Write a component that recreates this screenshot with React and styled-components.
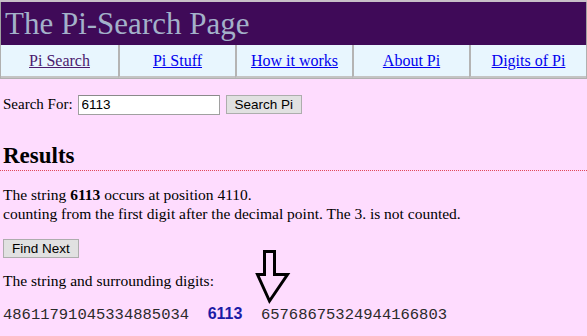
import React from "react";
import styled, { createGlobalStyle } from "styled-components";

const Global = createGlobalStyle`
  html, body { margin: 0; padding: 0; }
  body {
    background: #fedcfe;
    font-family: "Liberation Serif", "Times New Roman", serif;
    font-size: 15.5px;
    color: #000;
  }
`;

const Page = styled.div`
  width: 587px;
  height: 336px;
  overflow: hidden;
  background: #fedcfe;
  border-top: 2px solid #c8c0c8;
  box-sizing: border-box;
`;

const Header = styled.header`
  background: #3f0a58;
  height: 43px;
  display: flex;
  align-items: center;
  padding-left: 4px;
  border-left: 1px solid #a0a0a0;
  border-right: 1px solid #a0a0a0;
`;

const Title = styled.h1`
  margin: 0;
  font-weight: normal;
  font-size: 31px;
  color: #a3b1c9;
  font-family: "Liberation Serif", "Times New Roman", serif;
  line-height: 1;
  padding-bottom: 1px;
`;

const Nav = styled.nav`
  display: grid;
  grid-template-columns: repeat(5, 1fr);
  background: #e8f6fe;
  border: 1px solid #b0b0b0;
  border-top: none;
  height: 34px;
  box-sizing: border-box;
`;

const NavCell = styled.div`
  display: flex;
  align-items: center;
  justify-content: center;
  border-left: ${(p) => (p.$first ? "none" : "2px solid #b4b4b4")};
  border-bottom: 2px solid #c4c4c4;
`;

const NavLink = styled.a`
  font-size: 16px;
  color: ${(p) => (p.$visited ? "#4b1a6e" : "#0000ee")};
  text-decoration: underline;
`;

const Content = styled.main`
  position: relative;
  padding: 16px 3px 0;
`;

const SearchRow = styled.form`
  display: flex;
  align-items: center;
  height: 19px;
  margin: 0;
`;

const Label = styled.span`
  font-size: 15px;
  margin-right: 5px;
`;

const Input = styled.input`
  width: 142px;
  height: 20px;
  box-sizing: border-box;
  border: 1px solid #a0a0a0;
  border-top-color: #8a8a8a;
  padding: 1px 3px;
  margin: 0 6px 0 0;
  font-family: "Liberation Sans", Arial, sans-serif;
  font-size: 13.5px;
  background: #fff;
  color: #000;
`;

const Button = styled.button`
  display: block;
  height: 19px;
  box-sizing: border-box;
  padding: 0 8px;
  margin: ${(p) => p.$m || "0"};
  border: 1px solid #adadad;
  background: #e1e1e1;
  font-family: "Liberation Sans", Arial, sans-serif;
  font-size: 13.5px;
  color: #000;
  line-height: 1;
`;

const Heading = styled.h2`
  margin: 29px -3px 0;
  padding: 0 3px 1px;
  font-size: 23px;
  font-weight: bold;
  line-height: 26px;
  border-bottom: 1px dotted #e0485a;
`;

const Para = styled.p`
  margin: ${(p) => p.$m || "0"};
  font-size: 15.5px;
  line-height: 19px;
`;

const Digits = styled.div`
  margin-top: 14px;
  font-family: "Liberation Mono", "Courier New", monospace;
  font-size: 15.5px;
  line-height: 19px;
  color: #2a2a2a;
  white-space: pre;
`;

const Found = styled.b`
  color: #1b1ba6;
  font-family: "Liberation Sans", Arial, sans-serif;
  font-size: 16px;
`;

const Arrow = styled.svg`
  position: absolute;
  left: 250px;
  top: 166px;
`;

export default function App() {
  const tabs = [
    ["Pi Search", true],
    ["Pi Stuff"],
    ["How it works"],
    ["About Pi"],
    ["Digits of Pi"],
  ];
  return (
    <>
      <Global />
      <Page>
        <Header>
          <Title>The Pi-Search Page</Title>
        </Header>
        <Nav>
          {tabs.map(([t, v], i) => (
            <NavCell key={t} $first={i === 0}>
              <NavLink href="#" $visited={v}>{t}</NavLink>
            </NavCell>
          ))}
        </Nav>
        <Content>
          <SearchRow onSubmit={(e) => e.preventDefault()}>
            <Label>Search For:</Label>
            <Input defaultValue="6113" />
            <Button type="submit">Search Pi</Button>
          </SearchRow>
          <Heading>Results</Heading>
          <Para $m="14px 0 0">
            The string <b>6113</b> occurs at position 4110.
            <br />
            counting from the first digit after the decimal point. The 3. is not counted.
          </Para>
          <Button type="button" $m="16px 0 0">Find Next</Button>
          <Para $m="13px 0 0">The string and surrounding digits:</Para>
          <Digits>
            {"48611791045334885034  "}
            <Found>6113</Found>
            {"  65768675324944166803"}
          </Digits>
          <Arrow width="45" height="64" viewBox="0 0 45 64">
            <path
              d="M14.5 6.5 H24.5 V29.5 H37.5 L19.5 56 L7.5 29.5 H14.5 Z"
              fill="none"
              stroke="#000"
              strokeWidth="3"
              strokeLinejoin="miter"
            />
          </Arrow>
        </Content>
      </Page>
    </>
  );
}
